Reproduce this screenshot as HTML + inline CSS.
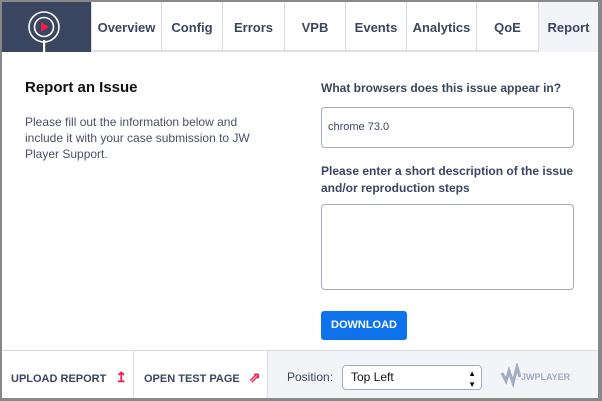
<!DOCTYPE html>
<html><head><style>
*{box-sizing:border-box;margin:0;padding:0}
body{width:602px;height:401px;background:#888;font-family:"Liberation Sans",sans-serif;position:relative;overflow:hidden}
.frame{position:absolute;left:2px;top:2px;width:596px;height:396px;background:#fff;overflow:hidden}
.nav{position:absolute;left:0;top:0;width:596px;height:50px;border-bottom:2px solid #dde0e8}
.logo{position:absolute;left:0;top:0;width:89px;height:50px;background:#3a4560}
.tab{position:absolute;top:0;height:50px;border-left:1px solid #d8dbe4;color:#3a4560;font-weight:bold;font-size:13px;line-height:52px;text-align:center}
.abs{position:absolute}
h1{position:absolute;left:23px;top:77px;font-size:15px;color:#111;font-weight:bold}
.p{position:absolute;left:23px;top:112px;width:250px;font-size:12px;line-height:16px;color:#4a5068}
.lbl{position:absolute;left:319px;font-size:12px;font-weight:bold;color:#3a4560;line-height:17px}
.inp{position:absolute;left:319px;width:253px;border:1px solid #a3abc2;border-radius:4px}
.btn{position:absolute;left:319px;top:309px;width:86px;height:29px;background:#0d72ec;border-radius:3px;color:#fff;font-size:11px;font-weight:bold;text-align:center;line-height:29px}
.foot{position:absolute;left:0;top:348px;width:596px;height:48px;border-top:1px solid #d8dbe4}
.fl{position:absolute;top:0;height:48px;line-height:52px;font-size:11px;font-weight:bold;color:#3a4560}
.ic{color:#ef1d4a;margin-left:6px;font-size:14px}
</style></head><body>
<div class="frame">
<div class="nav">
<div class="logo"><svg width="89" height="50"><circle cx="42" cy="25" r="15" fill="none" stroke="#fff" stroke-width="1.6"/><circle cx="42" cy="25" r="9.5" fill="none" stroke="#fff" stroke-width="1.6"/><polygon points="39,20 39,30 47,25" fill="#ef1d4a"/><rect x="41" y="38" width="2.2" height="12" fill="#fff"/></svg></div>
<div class="tab" style="left:89px;width:70px">Overview</div>
<div class="tab" style="left:159px;width:61px">Config</div>
<div class="tab" style="left:220px;width:62px">Errors</div>
<div class="tab" style="left:282px;width:61px">VPB</div>
<div class="tab" style="left:343px;width:61px">Events</div>
<div class="tab" style="left:404px;width:70px">Analytics</div>
<div class="tab" style="left:474px;width:62px">QoE</div>
<div class="tab" style="left:536px;width:60px;background:#f3f4f8">Report</div>
</div>
<h1>Report an Issue</h1>
<div class="p">Please fill out the information below and include it with your case submission to JW Player Support.</div>
<div class="lbl" style="top:78px">What browsers does this issue appear in?</div>
<div class="inp" style="top:105px;height:41px;font-size:11px;color:#3a4560;line-height:39px;padding-left:6px">chrome 73.0</div>
<div class="lbl" style="top:161px;width:260px">Please enter a short description of the issue and/or reproduction steps</div>
<div class="inp" style="top:202px;height:86px"></div>
<div class="btn">DOWNLOAD</div>
<div class="foot">
<div class="fl" style="left:9px">UPLOAD REPORT <span class="ic">↥</span></div>
<div class="abs" style="left:131px;top:0;width:1px;height:48px;background:#d8dbe4"></div>
<div class="fl" style="left:142px">OPEN TEST PAGE <span class="ic">⇗</span></div>
<div class="abs" style="left:265px;top:0;width:331px;height:48px;background:#f3f4f8;border-left:1px solid #d8dbe4"></div>
<div class="abs" style="left:285px;top:0;line-height:52px;font-size:12px;color:#3a4560">Position:</div>
<div class="abs" style="left:340px;top:14px;width:140px;height:25px;background:#fff;border:1px solid #a3abc2;border-radius:4px;font-size:12px;line-height:23px;padding-left:8px;color:#111">Top Left<span style="position:absolute;right:5px;top:2px;font-size:8px;line-height:11px">▲<br>▼</span></div>
<div class="abs" style="left:498px;top:12px;width:80px;height:26px;color:#a3abc2;font-size:9px;font-weight:bold"><svg width="24" height="26" style="position:absolute;left:0;top:0"><path d="M2 10 L6 18 L9 8 L13 20 L17 4 L20 14" fill="none" stroke="#a3abc2" stroke-width="3"/></svg><span style="position:absolute;left:21px;top:9px">JWPLAYER</span></div>
</div>
</div>
</body></html>
